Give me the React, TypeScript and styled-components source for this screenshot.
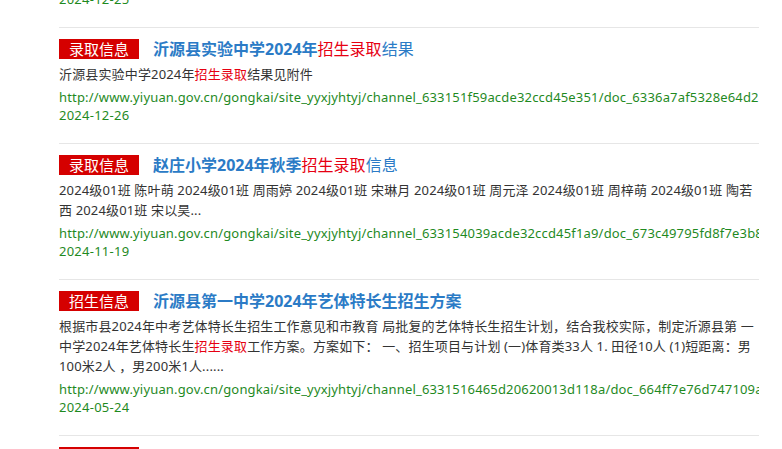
import React from "react";
import styled, { createGlobalStyle } from "styled-components";

const GlobalStyle = createGlobalStyle`
    html, body {
        margin: 0;
        padding: 0;
        background: #fff;
        overflow: hidden;
    }
    body {
        font-family: "Noto Sans", "Noto Sans CJK SC", sans-serif;
    }
`;

const Page = styled.div`
    width: 782px;
    height: 449px;
    overflow: hidden;
    padding-left: 59px;
    box-sizing: border-box;
`;

const ResultList = styled.div`
    width: 700px;
    margin-top: -10px;
`;

const Tail = styled.div`
    padding-bottom: 19px;
`;

const Item = styled.div`
    border-top: 1px solid #e6e6e6;
    padding: 11px 0 19px;
`;

const Header = styled.div`
    display: flex;
    align-items: center;
    height: 20px;
`;

const Tag = styled.span`
    flex: none;
    width: 80px;
    height: 20px;
    line-height: 20px;
    background: #d50000;
    color: #fff;
    font-size: 15px;
    text-align: center;
    font-family: "Noto Sans CJK SC", sans-serif;
`;

const Title = styled.a`
    margin-left: 14px;
    font-size: 16px;
    line-height: 20px;
    color: #2b7bc6;
    text-decoration: none;
    white-space: nowrap;
    b {
        font-weight: 700;
    }
`;

const Hl = styled.em`
    font-style: normal;
    color: #e60012;
`;

const Summary = styled.p`
    margin: 5px 0 0;
    font-size: 13px;
    line-height: 20px;
    letter-spacing: 0.15px;
    color: #333;
`;

const Url = styled.div`
    margin-top: 4px;
    font-size: 13px;
    line-height: 18px;
    letter-spacing: 0.17px;
    color: #1f8a1f;
    white-space: nowrap;
    overflow: hidden;
`;

const DateLine = styled.div`
    font-size: 13px;
    line-height: 18px;
    letter-spacing: 0.25px;
    color: #1f8a1f;
`;

interface Result {
    tag: string;
    before: string;
    hl?: string;
    after?: string;
    summary: React.ReactNode;
    url: string;
    date: string;
}

const results: Result[] = [
    {
        tag: "录取信息",
        before: "沂源县实验中学2024年",
        hl: "招生录取",
        after: "结果",
        summary: (
            <>
                沂源县实验中学2024年<Hl>招生录取</Hl>结果见附件
            </>
        ),
        url: "http://www.yiyuan.gov.cn/gongkai/site_yyxjyhtyj/channel_633151f59acde32ccd45e351/doc_6336a7af5328e64d28c0a1f3.html",
        date: "2024-12-26",
    },
    {
        tag: "录取信息",
        before: "赵庄小学2024年秋季",
        hl: "招生录取",
        after: "信息",
        summary:
            "2024级01班 陈叶萌 2024级01班 周雨婷 2024级01班 宋琳月 2024级01班 周元泽 2024级01班 周梓萌 2024级01班 陶若西 2024级01班 宋以昊...",
        url: "http://www.yiyuan.gov.cn/gongkai/site_yyxjyhtyj/channel_633154039acde32ccd45f1a9/doc_673c49795fd8f7e3b8a2c6d1.html",
        date: "2024-11-19",
    },
    {
        tag: "招生信息",
        before: "沂源县第一中学2024年艺体特长生招生方案",
        summary: (
            <>
                根据市县2024年中考艺体特长生招生工作意见和市教育 局批复的艺体特长生招生计划，结合我校实际，制定沂源县第 一中学2024年艺体特长生<Hl>招生录取</Hl>工作方案。方案如下： 一、招生项目与计划 (一)体育类33人 1. 田径10人 (1)短距离：男100米2人 ，男200米1人......
            </>
        ),
        url: "http://www.yiyuan.gov.cn/gongkai/site_yyxjyhtyj/channel_6331516465d20620013d118a/doc_664ff7e76d747109a3e5b2c0.html",
        date: "2024-05-24",
    },
    {
        tag: "录取信息",
        before: "",
        summary: "",
        url: "",
        date: "",
    },
];

function ResultItem({ r }: { r: Result }) {
    return (
        <Item>
            <Header>
                <Tag>{r.tag}</Tag>
                <Title href="#">
                    <b>{r.before}</b>
                    {r.hl && <Hl>{r.hl}</Hl>}
                    {r.after}
                </Title>
            </Header>
            <Summary>{r.summary}</Summary>
            <Url>{r.url}</Url>
            <DateLine>{r.date}</DateLine>
        </Item>
    );
}

export default function App() {
    return (
        <>
            <GlobalStyle />
            <Page>
                <ResultList>
                    <Tail>
                        <DateLine>2024-12-25</DateLine>
                    </Tail>
                    {results.map((r, i) => (
                        <ResultItem key={i} r={r} />
                    ))}
                </ResultList>
            </Page>
        </>
    );
}
